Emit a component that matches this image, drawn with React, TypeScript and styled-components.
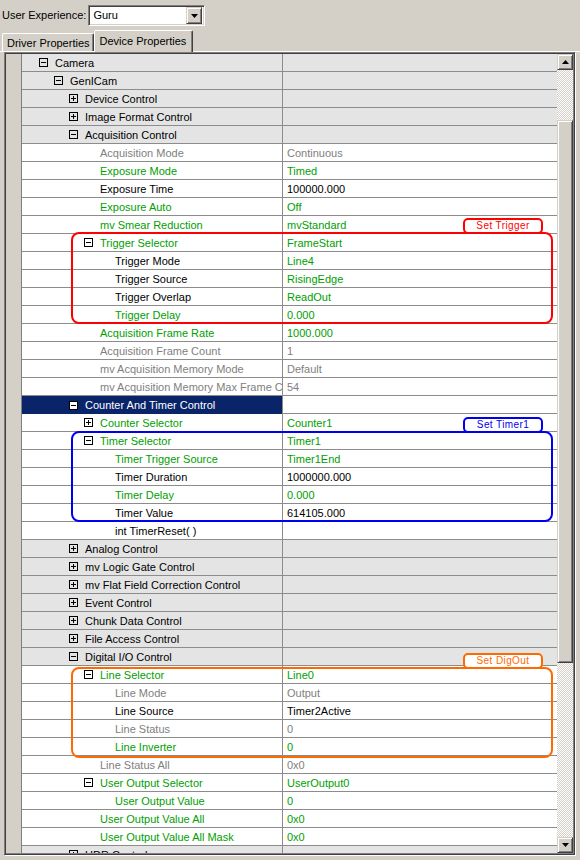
import React from "react";
import styled, { createGlobalStyle, css } from "styled-components";

const GlobalStyle = createGlobalStyle`
  html, body { margin: 0; padding: 0; background: #d4d0c8; }
  body {
    font-family: "Liberation Sans", Arial, sans-serif;
    font-size: 11px;
    color: #000;
    width: 580px;
    height: 860px;
    overflow: hidden;
  }
  * { box-sizing: border-box; }
`;

type Tone = "g" | "k" | "d";
const toneColor: Record<Tone, string> = { g: "#00a000", k: "#000000", d: "#808080" };

interface Item {
  label: string;
  level: number;
  cat?: boolean;
  exp?: "+" | "-";
  tone?: Tone;
  value?: string;
  vtone?: Tone;
  sel?: boolean;
}

const rows: Item[] = [
  { label: "Camera", level: 0, cat: true, exp: "-" },
  { label: "GenICam", level: 1, cat: true, exp: "-" },
  { label: "Device Control", level: 2, cat: true, exp: "+" },
  { label: "Image Format Control", level: 2, cat: true, exp: "+" },
  { label: "Acquisition Control", level: 2, cat: true, exp: "-" },
  { label: "Acquisition Mode", level: 3, tone: "d", value: "Continuous" },
  { label: "Exposure Mode", level: 3, tone: "g", value: "Timed" },
  { label: "Exposure Time", level: 3, tone: "k", value: "100000.000" },
  { label: "Exposure Auto", level: 3, tone: "g", value: "Off" },
  { label: "mv Smear Reduction", level: 3, tone: "g", value: "mvStandard" },
  { label: "Trigger Selector", level: 3, tone: "g", exp: "-", value: "FrameStart" },
  { label: "Trigger Mode", level: 4, tone: "k", value: "Line4", vtone: "g" },
  { label: "Trigger Source", level: 4, tone: "k", value: "RisingEdge", vtone: "g" },
  { label: "Trigger Overlap", level: 4, tone: "k", value: "ReadOut", vtone: "g" },
  { label: "Trigger Delay", level: 4, tone: "g", value: "0.000" },
  { label: "Acquisition Frame Rate", level: 3, tone: "g", value: "1000.000" },
  { label: "Acquisition Frame Count", level: 3, tone: "d", value: "1" },
  { label: "mv Acquisition Memory Mode", level: 3, tone: "d", value: "Default" },
  { label: "mv Acquisition Memory Max Frame Count", level: 3, tone: "d", value: "54" },
  { label: "Counter And Timer Control", level: 2, cat: true, exp: "-", sel: true },
  { label: "Counter Selector", level: 3, tone: "g", exp: "+", value: "Counter1" },
  { label: "Timer Selector", level: 3, tone: "g", exp: "-", value: "Timer1" },
  { label: "Timer Trigger Source", level: 4, tone: "g", value: "Timer1End" },
  { label: "Timer Duration", level: 4, tone: "k", value: "1000000.000" },
  { label: "Timer Delay", level: 4, tone: "g", value: "0.000" },
  { label: "Timer Value", level: 4, tone: "k", value: "614105.000" },
  { label: "int TimerReset( )", level: 4, tone: "k" },
  { label: "Analog Control", level: 2, cat: true, exp: "+" },
  { label: "mv Logic Gate Control", level: 2, cat: true, exp: "+" },
  { label: "mv Flat Field Correction Control", level: 2, cat: true, exp: "+" },
  { label: "Event Control", level: 2, cat: true, exp: "+" },
  { label: "Chunk Data Control", level: 2, cat: true, exp: "+" },
  { label: "File Access Control", level: 2, cat: true, exp: "+" },
  { label: "Digital I/O Control", level: 2, cat: true, exp: "-" },
  { label: "Line Selector", level: 3, tone: "g", exp: "-", value: "Line0" },
  { label: "Line Mode", level: 4, tone: "d", value: "Output" },
  { label: "Line Source", level: 4, tone: "k", value: "Timer2Active" },
  { label: "Line Status", level: 4, tone: "d", value: "0" },
  { label: "Line Inverter", level: 4, tone: "g", value: "0" },
  { label: "Line Status All", level: 3, tone: "d", value: "0x0" },
  { label: "User Output Selector", level: 3, tone: "g", exp: "-", value: "UserOutput0" },
  { label: "User Output Value", level: 4, tone: "g", value: "0" },
  { label: "User Output Value All", level: 3, tone: "g", value: "0x0" },
  { label: "User Output Value All Mask", level: 3, tone: "g", value: "0x0" },
  { label: "HDR Control", level: 2, cat: true, exp: "+" },
];

const raised = css`
  background: #d4d0c8;
  border: 1px solid;
  border-color: #d4d0c8 #404040 #404040 #d4d0c8;
  box-shadow: inset 1px 1px 0 #ffffff, inset -1px -1px 0 #808080;
`;

const Page = styled.div`
  display: flex;
  flex-direction: column;
  width: 580px;
  height: 860px;
`;

const TopBar = styled.div`
  display: flex;
  align-items: center;
  height: 31px;
  padding: 0 0 0 2px;
`;

const FieldLabel = styled.span`
  font-size: 11px;
  line-height: 13px;
`;

const Combo = styled.div`
  display: flex;
  align-items: center;
  margin-left: 2px;
  width: 117px;
  height: 21px;
  background: #ffffff;
  border: 1px solid;
  border-color: #808080 #ffffff #ffffff #808080;
  box-shadow: inset 1px 1px 0 #404040, inset -1px -1px 0 #d4d0c8;
  padding: 2px 2px 2px 4px;
`;

const ComboText = styled.span`
  flex: 1;
  line-height: 13px;
`;

const ComboButton = styled.div`
  ${raised};
  width: 16px;
  height: 17px;
  display: flex;
  align-items: center;
  justify-content: center;
`;

const TabStrip = styled.div`
  display: flex;
  align-items: flex-end;
  height: 21px;
  padding-left: 2px;
  border-bottom: 1px solid #ffffff;
`;

const Tab = styled.div<{ $active?: boolean }>`
  display: flex;
  align-items: center;
  height: ${(p) => (p.$active ? "22px" : "18px")};
  margin-bottom: ${(p) => (p.$active ? "-1px" : "0")};
  padding: ${(p) => (p.$active ? "0 6px 2px 5px" : "0 3px 0 4px")};
  background: #d4d0c8;
  border-top: 1px solid #ffffff;
  border-left: 1px solid #ffffff;
  border-right: 1px solid #404040;
  box-shadow: inset -1px 0 0 #808080;
  border-radius: 2px 2px 0 0;
  position: relative;
  z-index: ${(p) => (p.$active ? 1 : 0)};
  white-space: nowrap;
`;

const Panel = styled.div`
  display: flex;
  margin-left: 4px;
  width: 571px;
  height: 803px;
  border: 1px solid;
  border-color: #808080 #404040 #404040 #808080;
  box-shadow: inset 1px 1px 0 #404040, inset -1px -1px 0 #808080, 1px 1px 0 #ffffff;
  padding: 1px;
`;

const Gutter = styled.div`
  width: 16px;
  flex: none;
  background: #d4d0c8;
  border-right: 1px solid #808080;
`;

const ListArea = styled.div`
  position: relative;
  width: 535px;
  flex: none;
  overflow: hidden;
  background: #ffffff;
`;

const Row = styled.div<{ $cat?: boolean }>`
  display: grid;
  grid-template-columns: 261px 1fr;
  height: 18px;
  border-bottom: 1px solid #8c8c8c;
  background: ${(p) => (p.$cat ? "#e4e4e4" : "#ffffff")};
`;

const NameCell = styled.div<{ $level: number; $sel?: boolean; $tone: string }>`
  display: flex;
  align-items: center;
  padding-left: ${(p) => 17 + p.$level * 15}px;
  padding-top: 1px;
  border-right: 1px solid #8c8c8c;
  overflow: hidden;
  white-space: nowrap;
  color: ${(p) => (p.$sel ? "#ffffff" : p.$tone)};
  background: ${(p) => (p.$sel ? "#0a246a" : "transparent")};
  margin-bottom: ${(p) => (p.$sel ? "-1px" : "0")};
`;

const ExpSlot = styled.span`
  width: 16px;
  flex: none;
  display: flex;
  align-items: center;
  margin-top: -1px;
`;

const Expander = styled.span<{ $plus?: boolean; $sel?: boolean }>`
  position: relative;
  width: 9px;
  height: 9px;
  border: 1px solid #000;
  background: ${(p) => (p.$sel ? "#ffffff" : "transparent")};
  &::before {
    content: "";
    position: absolute;
    left: 1px;
    top: 3px;
    width: 5px;
    height: 1px;
    background: #000;
  }
  ${(p) =>
    p.$plus &&
    css`
      &::after {
        content: "";
        position: absolute;
        left: 3px;
        top: 1px;
        width: 1px;
        height: 5px;
        background: #000;
      }
    `}
`;

const NameText = styled.span`
  line-height: 13px;
`;

const ValueCell = styled.div<{ $tone: string; $white?: boolean }>`
  display: flex;
  align-items: center;
  padding-left: 4px;
  padding-top: 1px;
  overflow: hidden;
  white-space: nowrap;
  color: ${(p) => p.$tone};
  background: ${(p) => (p.$white ? "#ffffff" : "transparent")};
`;

const Frame = styled.div<{ $c: string }>`
  position: absolute;
  left: 49px;
  width: 482px;
  border: 2px solid ${(p) => p.$c};
  border-radius: 8px;
  pointer-events: none;
`;

const Badge = styled.div<{ $c: string }>`
  position: absolute;
  left: 441px;
  width: 80px;
  height: 16px;
  border: 2px solid ${(p) => p.$c};
  border-radius: 5px;
  background: #ffffff;
  color: ${(p) => p.$c};
  font-size: 10px;
  line-height: 12px;
  letter-spacing: 0.4px;
  text-align: center;
  z-index: 2;
`;

const ScrollBar = styled.div`
  width: 16px;
  flex: none;
  display: flex;
  flex-direction: column;
  background-color: #d4d0c8;
  background-image: conic-gradient(#ffffff 25%, #d4d0c8 0 50%, #ffffff 0 75%, #d4d0c8 0);
  background-size: 2px 2px;
`;

const ScrollButton = styled.div<{ $bottom?: boolean }>`
  ${raised};
  width: 16px;
  height: 16px;
  flex: none;
  display: flex;
  align-items: center;
  justify-content: center;
  margin-top: ${(p) => (p.$bottom ? "auto" : "0")};
`;

const Thumb = styled.div`
  ${raised};
  width: 16px;
  height: 543px;
  margin-top: 50px;
  flex: none;
`;

const Arrow = ({ down }: { down?: boolean }) => (
  <svg width="7" height="4" viewBox="0 0 7 4" style={{ display: "block" }}>
    {down ? <polygon points="0,0 7,0 3.5,4" fill="#000" /> : <polygon points="3.5,0 7,4 0,4" fill="#000" />}
  </svg>
);

const callouts = [
  { c: "#ff0000", text: "Set Trigger", frameTop: 178, frameH: 92, badgeTop: 164 },
  { c: "#0000f0", text: "Set Timer1", frameTop: 377, frameH: 91, badgeTop: 363 },
  { c: "#ff6a00", text: "Set DigOut", frameTop: 613, frameH: 91, badgeTop: 599 },
];

export default function App() {
  return (
    <>
      <GlobalStyle />
      <Page>
        <TopBar>
          <FieldLabel>User Experience:</FieldLabel>
          <Combo>
            <ComboText>Guru</ComboText>
            <ComboButton>
              <Arrow down />
            </ComboButton>
          </Combo>
        </TopBar>
        <TabStrip>
          <Tab>Driver Properties</Tab>
          <Tab $active>Device Properties</Tab>
        </TabStrip>
        <Panel>
          <Gutter />
          <ListArea>
            {rows.map((r, i) => {
              const tone = toneColor[r.tone ?? "k"];
              const vtone = toneColor[r.vtone ?? r.tone ?? "k"];
              return (
                <Row key={i} $cat={r.cat}>
                  <NameCell $level={r.level} $sel={r.sel} $tone={tone}>
                    <ExpSlot>{r.exp && <Expander $plus={r.exp === "+"} $sel={r.sel} />}</ExpSlot>
                    <NameText>{r.label}</NameText>
                  </NameCell>
                  <ValueCell $tone={vtone} $white={r.sel}>
                    {r.value}
                  </ValueCell>
                </Row>
              );
            })}
            {callouts.map((c) => (
              <React.Fragment key={c.text}>
                <Frame $c={c.c} style={{ top: c.frameTop, height: c.frameH }} />
                <Badge $c={c.c} style={{ top: c.badgeTop }}>
                  {c.text}
                </Badge>
              </React.Fragment>
            ))}
          </ListArea>
          <ScrollBar>
            <ScrollButton>
              <Arrow />
            </ScrollButton>
            <Thumb />
            <ScrollButton $bottom>
              <Arrow down />
            </ScrollButton>
          </ScrollBar>
        </Panel>
      </Page>
    </>
  );
}
